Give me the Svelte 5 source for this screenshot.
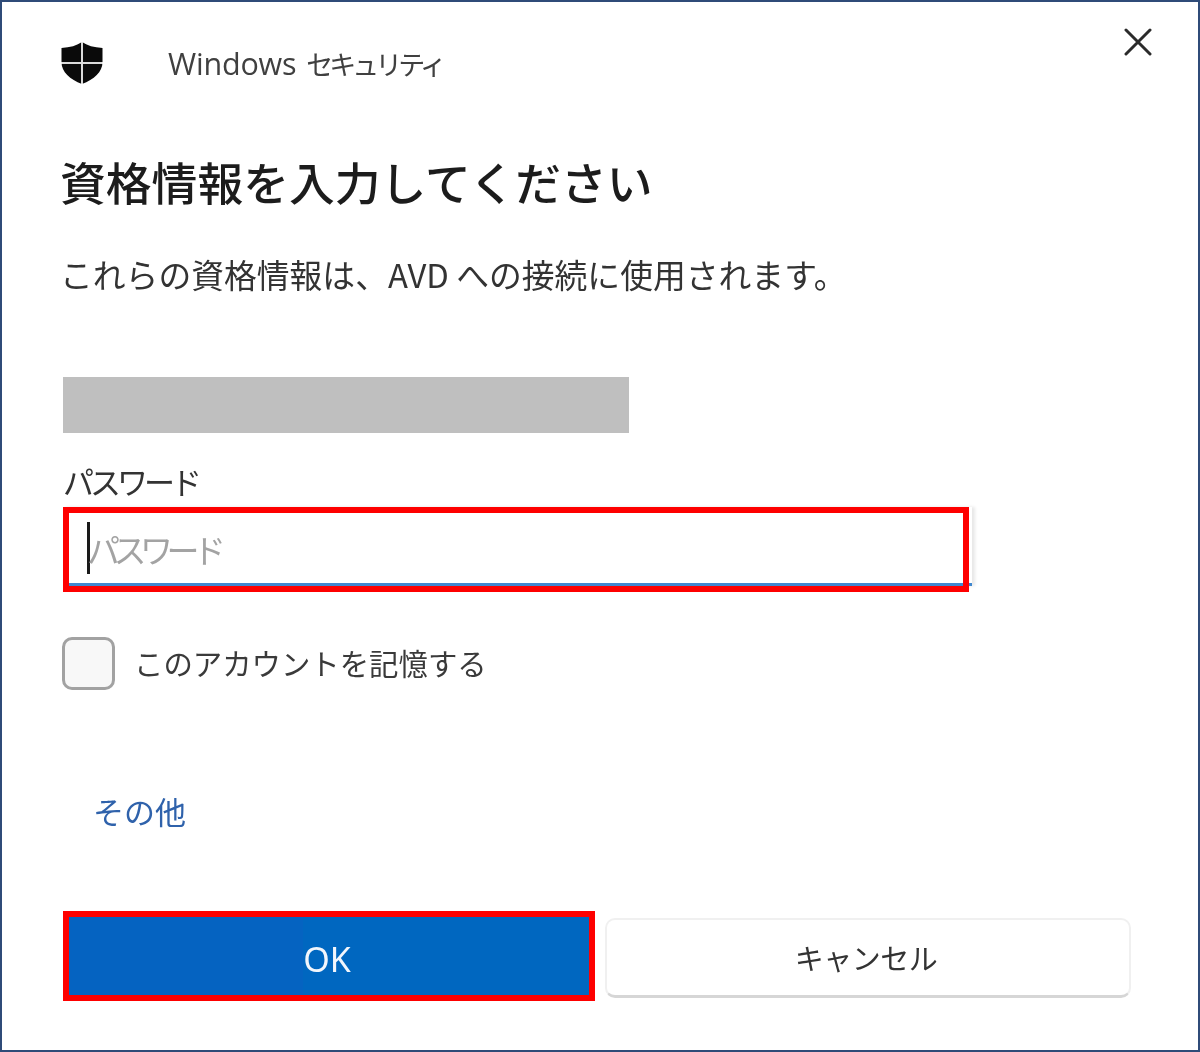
<script>
  let remember = $state(false);
</script>

<div class="dialog">
  <header class="top">
    <svg class="shield" viewBox="0 0 42 42" aria-hidden="true">
      <path d="M21 0 C26 3.500 33 5.500 41.500 6 V20 C41.500 30 33 37.500 21 42 C9 37.500 0.500 30 0.500 20 V6 C9 5.500 16 3.500 21 0 Z" fill="#0a0a0a" />
      <path d="M21 0 V42 M0 21 H42" stroke="#fff" stroke-width="2" opacity="0.85" />
    </svg>
    <span class="app"><span class="latin">Windows</span><span class="kana">セキュリティ</span></span>
    <svg class="close" viewBox="0 0 28 28" aria-hidden="true">
      <path d="M2 2 L26 26 M26 2 L2 26" stroke="#2b2b2b" stroke-width="3" stroke-linecap="round" />
    </svg>
  </header>

  <h1>資格情報を入力してください</h1>
  <p class="sub">これらの資格情報は、AVD への接続に使用されます。</p>

  <div class="redacted"></div>

  <div class="label">パスワード</div>
  <div class="field-wrap">
    <div class="field">
      <span class="caret"></span>
      <span class="placeholder">パスワード</span>
    </div>
    <div class="mark"></div>
  </div>

  <label class="check">
    <input type="checkbox" bind:checked={remember} />
    <span class="box"></span>
    <span class="check-text">このアカウントを記憶する</span>
  </label>

  <div class="more">その他</div>

  <div class="actions">
    <div class="ok-wrap">
      <button class="ok">OK</button>
      <div class="mark"></div>
    </div>
    <button class="cancel">キャンセル</button>
  </div>
</div>

<style>
  :global(body) {
    margin: 0;
    background: #fff;
  }
  .dialog {
    box-sizing: border-box;
    width: 1200px;
    height: 1052px;
    border: 2px solid #2f4b78;
    background: #fff;
    padding: 0 0 0 60px;
    font-family: "Noto Sans CJK JP", "Noto Sans", sans-serif;
    color: #2a2a2a;
    overflow: hidden;
    filter: blur(0.5px);
  }
  .top {
    display: flex;
    align-items: flex-start;
    height: 120px;
    position: relative;
  }
  .shield {
    width: 42px;
    height: 42px;
    margin: 40px 0 0 -1px;
  }
  .app {
    display: flex;
    align-items: baseline;
    margin: 41px 0 0 65px;
    line-height: 40px;
    color: #404040;
  }
  .latin {
    font-family: "Open Sans", "Noto Sans", sans-serif;
    font-size: 30.500px;
    letter-spacing: -0.200px;
    margin-right: 10px;
  }
  .kana {
    font-size: 27px;
    letter-spacing: -4px;
  }
  .close {
    position: absolute;
    right: 46px;
    top: 26px;
    width: 28px;
    height: 28px;
  }
  h1 {
    margin: 24px 0 0 -2px;
    font-size: 45.800px;
    line-height: 70px;
    font-weight: 500;
    color: #1c1c1c;
  }
  .sub {
    margin: 33px 0 0 -2px;
    font-size: 32.800px;
    line-height: 50px;
    color: #333;
  }
  .redacted {
    width: 566px;
    height: 56px;
    margin: 78px 0 0 1px;
    background: #bfbfbf;
  }
  .label {
    margin: 26px 0 0 1px;
    font-size: 31px;
    line-height: 44px;
    letter-spacing: -4px;
    color: #333;
  }
  .field-wrap {
    position: relative;
    width: 906px;
    height: 85px;
    margin: 4px 0 0 1px;
  }
  .field {
    position: absolute;
    inset: 0 -3px 6px 0;
    display: flex;
    align-items: center;
    padding-left: 24px;
    border-bottom: 3px solid #3f87cf;
    box-shadow: 3px 0 3px #e8e8e8;
    box-sizing: border-box;
  }
  .caret {
    width: 3px;
    height: 52px;
    background: #1a1a1a;
    margin-top: 5px;
  }
  .placeholder {
    font-size: 33px;
    letter-spacing: -6.500px;
    color: #a3a3a3;
    line-height: 50px;
    margin: 8px 0 0 -3px;
  }
  .mark {
    position: absolute;
    inset: 0;
    border: 6px solid #fe0000;
    pointer-events: none;
  }
  .check {
    display: flex;
    align-items: center;
    margin: 45px 0 0 0;
    gap: 20px;
    height: 53px;
  }
  .check input {
    position: absolute;
    opacity: 0;
    width: 0;
    height: 0;
  }
  .box {
    box-sizing: border-box;
    width: 53px;
    height: 53px;
    border: 3px solid #a2a2a2;
    border-radius: 10px;
    background: #f8f8f8;
  }
  .check-text {
    font-size: 29.400px;
    margin: -4px 0 0 -1px;
    line-height: 50px;
    color: #3a3a3a;
  }
  .more {
    margin: 96px 0 0 31px;
    font-size: 31px;
    line-height: 50px;
    color: #2f62ab;
  }
  .actions {
    display: flex;
    align-items: flex-start;
    margin: 75px 0 0 1px;
    gap: 10px;
  }
  .ok-wrap {
    position: relative;
    width: 532px;
    height: 90px;
    box-sizing: border-box;
    padding: 6px;
  }
  button {
    font-family: inherit;
    cursor: pointer;
    padding: 0;
  }
  .ok {
    width: 100%;
    height: 78px;
    padding: 5px 4px 0 0;
    background: linear-gradient(90deg, #0563c1 45%, #0067c0 45%);
    border: 0;
    color: #f2f6fc;
    font-size: 34px;
    font-family: "Noto Sans", sans-serif;
  }
  .cancel {
    width: 526px;
    height: 80px;
    margin-top: 7px;
    padding: 0 4px 2px 0;
    border: 2px solid #f0f0f0;
    border-bottom: 3px solid #d6d6d6;
    border-radius: 10px;
    background: #fff;
    font-size: 29px;
    letter-spacing: -0.500px;
    color: #333;
  }
</style>
